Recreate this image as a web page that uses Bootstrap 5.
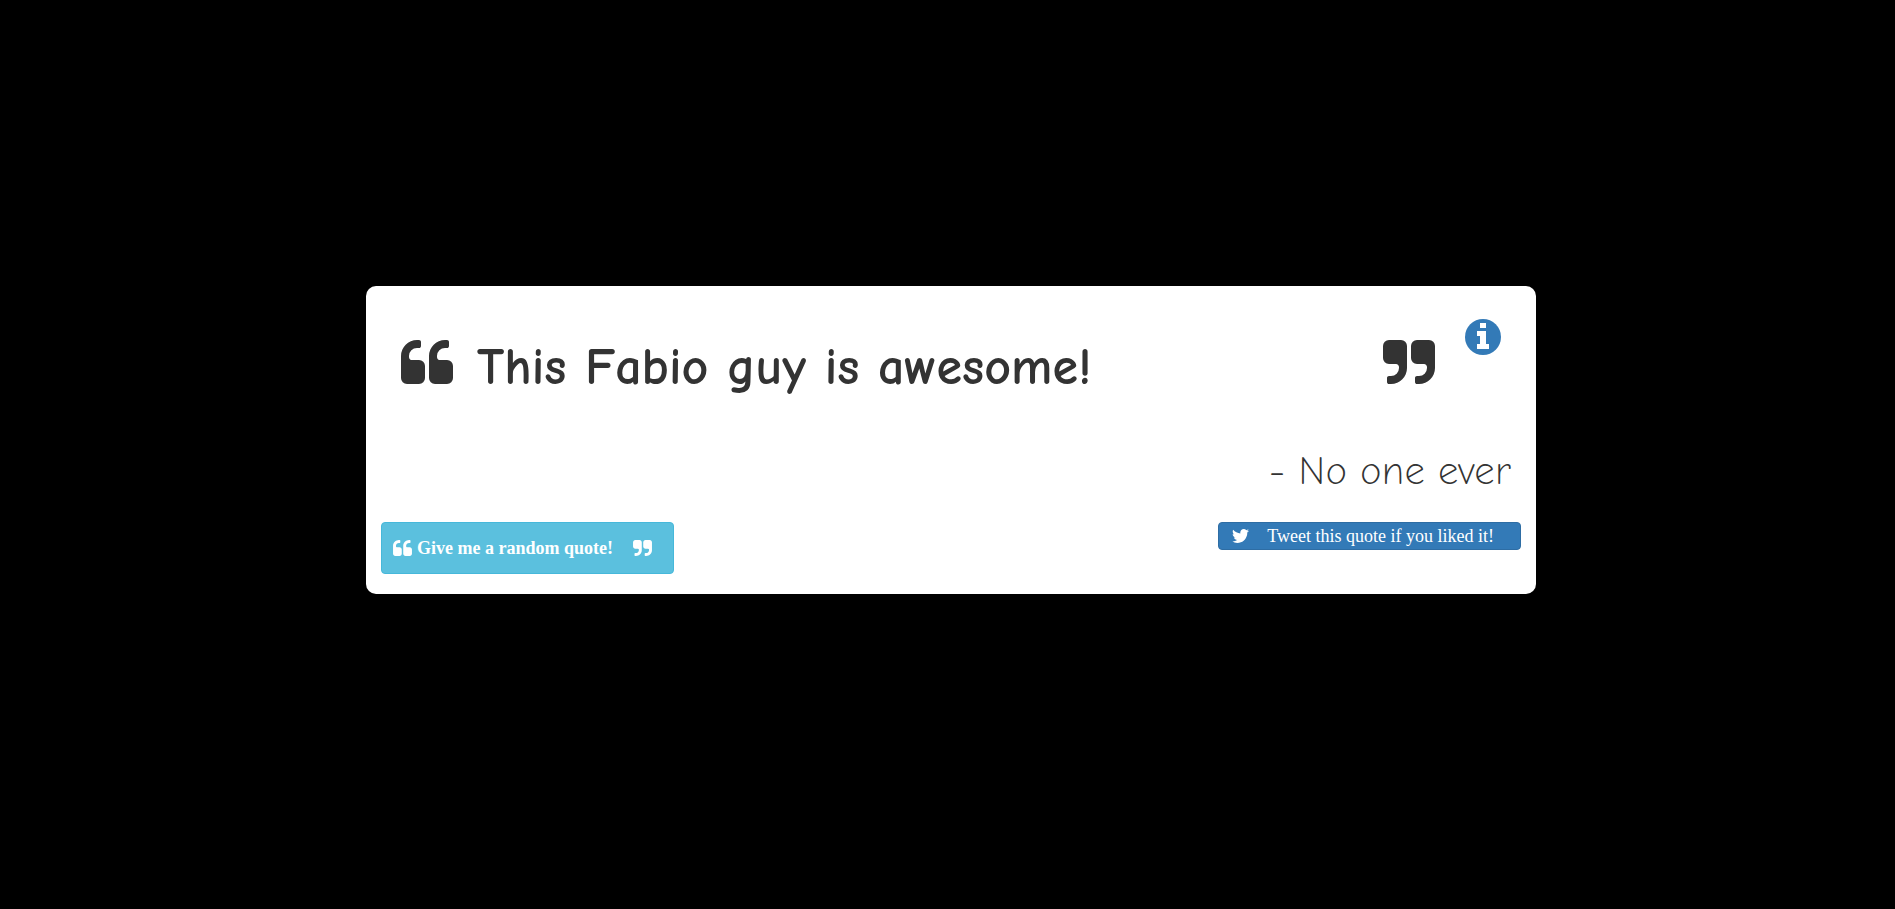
<!DOCTYPE html>
<html lang="en">
<head>
<meta charset="utf-8">
<meta name="viewport" content="width=device-width, initial-scale=1">
<title>Random Quote Machine</title>
<link rel="stylesheet" href="https://cdn.jsdelivr.net/npm/bootstrap@5.3.0/dist/css/bootstrap.min.css">
<style>
  body { background: #000; color: #333; font-family: "Liberation Serif", serif; }
  .quote-page { padding: 0 0 29px 7px; }
  .quote-box { max-width: 1170px; background: #fff; border-radius: 10px; padding: 33px 15px 20px; }
  .quote-line { padding: 0 20px; }
  .quote-row { padding-top: 20px; }
  .quote-text { font: 700 52px/56px "Comic Neue", Lato, sans-serif; margin-left: 24px; }
  .quote-author { font: 300 40px/48px "Comic Neue", "Open Sans", sans-serif; margin: 52px 10px 27px; }
  .mark-lg { width: 52px; height: 44px; margin-top: 1px; }
  .mark-sm { width: 19px; height: 16px; }
  .info-link { color: #337ab7; margin-left: 30px; }
  .info-link svg { width: 36px; height: 36px; }
  .btn { --bs-btn-font-size: 18px; --bs-btn-line-height: 24px; --bs-btn-border-radius: 4px; --bs-btn-color: #fff; --bs-btn-hover-color: #fff; }
  .btn-quote { --bs-btn-bg: #5bc0de; --bs-btn-border-color: #46b8da; --bs-btn-hover-bg: #31b0d5; --bs-btn-font-weight: 700; padding: 13px 21px 13px 11px; }
  .btn-quote span { margin: 0 20px 0 5px; }
  .btn-tweet { --bs-btn-bg: #337ab7; --bs-btn-border-color: #2e6da4; --bs-btn-hover-bg: #286090; padding: 1px 26px 1px 13px; }
  .btn-tweet span { margin-left: 18px; }
</style>
</head>
<body>
<svg class="d-none" aria-hidden="true">
  <symbol id="quote-left" viewBox="0 128 1664 1408"><path d="M768 960v384q0 80-56 136t-136 56H192q-80 0-136-56T0 1344V640q0-104 40.500-198.500T150 278t163.500-109.500T512 128h64q26 0 45 19t19 45v128q0 26-19 45t-45 19h-64q-106 0-181 75t-75 181v32q0 40 28 68t68 28h224q80 0 136 56t56 136zM1664 960v384q0 80-56 136t-136 56h-384q-80 0-136-56t-56-136V640q0-104 40.500-198.500T1046 278t163.500-109.500T1408 128h64q26 0 45 19t19 45v128q0 26-19 45t-45 19h-64q-106 0-181 75t-75 181v32q0 40 28 68t68 28h224q80 0 136 56t56 136z"/></symbol>
  <symbol id="quote-right" viewBox="0 128 1664 1408"><path d="M768 320v704q0 104-40.500 198.500T618 1386t-163.500 109.500T256 1536h-64q-26 0-45-19t-19-45v-128q0-26 19-45t45-19h64q106 0 181-75t75-181v-32q0-40-28-68t-68-28H192q-80 0-136-56T0 704V320q0-80 56-136t136-56h384q80 0 136 56t56 136zM1664 320v704q0 104-40.500 198.500T1514 1386t-163.500 109.500T1152 1536h-64q-26 0-45-19t-19-45v-128q0-26 19-45t45-19h64q106 0 181-75t75-181v-32q0-40-28-68t-68-28h-224q-80 0-136-56t-56-136V320q0-80 56-136t136-56h384q80 0 136 56t56 136z"/></symbol>
</svg>
<main class="quote-page min-vh-100 d-flex align-items-center justify-content-center">
  <div class="quote-box w-100">
    <div class="quote-line d-flex align-items-start">
      <div class="quote-row d-flex flex-grow-1 align-items-start">
        <svg class="mark-lg flex-shrink-0" fill="currentColor" aria-hidden="true"><use href="#quote-left"/></svg>
        <h1 class="quote-text mb-0 flex-grow-1">This Fabio guy is awesome!</h1>
        <svg class="mark-lg flex-shrink-0" fill="currentColor" aria-hidden="true"><use href="#quote-right"/></svg>
      </div>
      <a class="info-link d-flex" href="#" aria-label="About">
        <svg viewBox="0 0 36 36" aria-hidden="true"><circle cx="18" cy="18" r="18" fill="currentColor"/><path fill="#fff" d="M15 4h6v5h-6zM12 12h9v13h3v5H12v-5h3v-8h-3z"/></svg>
      </a>
    </div>
    <p class="quote-author text-end">- No one ever</p>
    <div class="d-flex flex-wrap justify-content-between align-items-start gap-2">
      <button type="button" class="btn btn-quote d-flex align-items-center">
        <svg class="mark-sm" fill="currentColor" aria-hidden="true"><use href="#quote-left"/></svg>
        <span>Give me a random quote!</span>
        <svg class="mark-sm" fill="currentColor" aria-hidden="true"><use href="#quote-right"/></svg>
      </button>
      <a class="btn btn-tweet d-flex align-items-center" href="#">
        <svg width="17" height="14" viewBox="44 256 1576 1280" fill="currentColor" aria-hidden="true"><path d="M1620 408q-67 98-162 167 1 14 1 42 0 130-38 259.500T1305.500 1125 1121 1335.500t-258 146-323 54.500q-271 0-496-145 35 4 78 4 225 0 401-138-105-2-188-64.500T221 1033q33 5 61 5 43 0 85-11-112-23-185.500-111.500T108 710v-4q68 38 146 41-66-44-105-115t-39-154q0-88 44-163 121 149 294.500 238.500T820 653q-8-38-8-74 0-134 94.500-228.500T1135 256q140 0 236 102 109-21 205-78-37 115-142 178 93-10 186-50z"/></svg>
        <span>Tweet this quote if you liked it!</span>
      </a>
    </div>
  </div>
</main>
<script src="https://cdn.jsdelivr.net/npm/bootstrap@5.3.0/dist/js/bootstrap.bundle.min.js"></script>
</body>
</html>
